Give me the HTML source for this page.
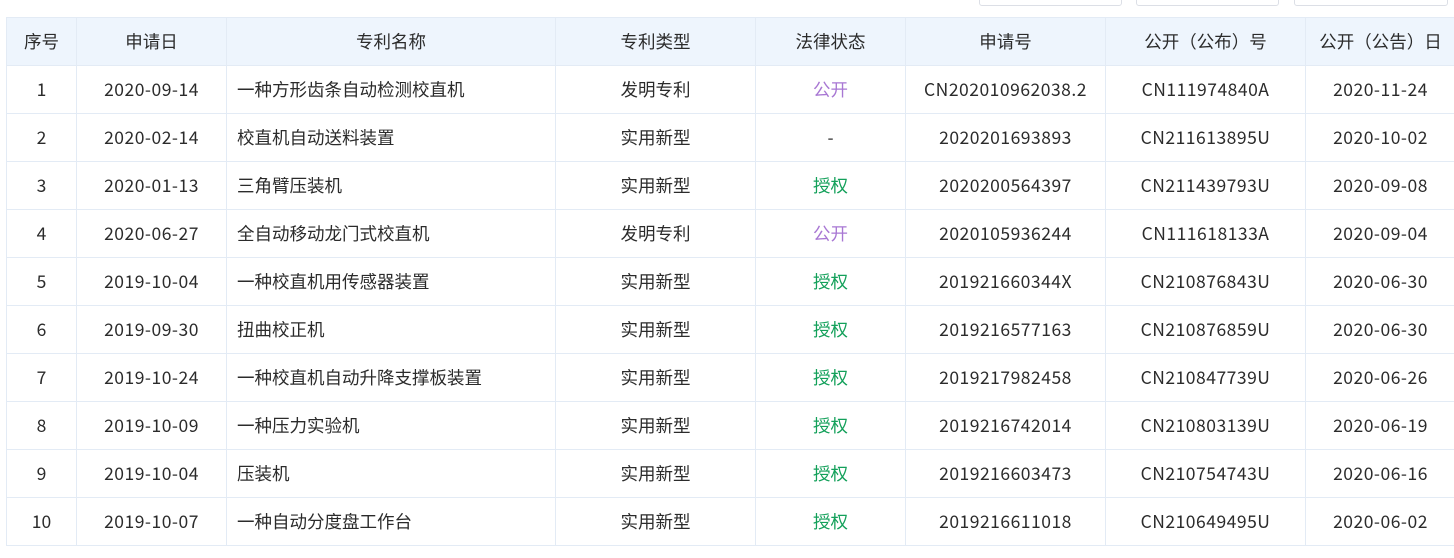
<!DOCTYPE html>
<html><head><meta charset="utf-8"><style>
body{margin:0;width:1454px;height:558px;background:#fff;overflow:hidden;font-family:"Noto Sans CJK SC","Liberation Sans",sans-serif;position:relative}
.btn{position:absolute;top:-10px;height:14px;border:1px solid #dcdfe6;border-radius:3px;background:#fff}
table{position:absolute;left:6px;top:17px;width:1449px;border-collapse:collapse;table-layout:fixed;font-size:17.5px;color:#2b2b2b}
td,th{border:1px solid #e3ebf5;height:47px;padding:0;text-align:center;font-weight:normal;white-space:nowrap;overflow:hidden;line-height:20px}
th{background:#eef5fd;color:#2b2b2b}
td.l{text-align:left;padding-left:10px}
td.n{letter-spacing:0.5px}
.p{color:#a877d3}.g{color:#13a05a}
</style></head><body>
<div class="btn" style="left:979px;width:141px"></div>
<div class="btn" style="left:1136px;width:141px"></div>
<div class="btn" style="left:1294px;width:152px"></div>
<table>
<colgroup><col style="width:70px"><col style="width:150px"><col style="width:329px"><col style="width:200px"><col style="width:150px"><col style="width:200px"><col style="width:200px"><col style="width:150px"></colgroup>
<tr><th>序号</th><th>申请日</th><th>专利名称</th><th>专利类型</th><th>法律状态</th><th>申请号</th><th>公开（公布）号</th><th>公开（公告）日</th></tr>
<tr><td>1</td><td class="n">2020-09-14</td><td class="l">一种方形齿条自动检测校直机</td><td>发明专利</td><td class="p">公开</td><td class="n">CN202010962038.2</td><td class="n">CN111974840A</td><td class="n">2020-11-24</td></tr>
<tr><td>2</td><td class="n">2020-02-14</td><td class="l">校直机自动送料装置</td><td>实用新型</td><td>-</td><td class="n">2020201693893</td><td class="n">CN211613895U</td><td class="n">2020-10-02</td></tr>
<tr><td>3</td><td class="n">2020-01-13</td><td class="l">三角臂压装机</td><td>实用新型</td><td class="g">授权</td><td class="n">2020200564397</td><td class="n">CN211439793U</td><td class="n">2020-09-08</td></tr>
<tr><td>4</td><td class="n">2020-06-27</td><td class="l">全自动移动龙门式校直机</td><td>发明专利</td><td class="p">公开</td><td class="n">2020105936244</td><td class="n">CN111618133A</td><td class="n">2020-09-04</td></tr>
<tr><td>5</td><td class="n">2019-10-04</td><td class="l">一种校直机用传感器装置</td><td>实用新型</td><td class="g">授权</td><td class="n">201921660344X</td><td class="n">CN210876843U</td><td class="n">2020-06-30</td></tr>
<tr><td>6</td><td class="n">2019-09-30</td><td class="l">扭曲校正机</td><td>实用新型</td><td class="g">授权</td><td class="n">2019216577163</td><td class="n">CN210876859U</td><td class="n">2020-06-30</td></tr>
<tr><td>7</td><td class="n">2019-10-24</td><td class="l">一种校直机自动升降支撑板装置</td><td>实用新型</td><td class="g">授权</td><td class="n">2019217982458</td><td class="n">CN210847739U</td><td class="n">2020-06-26</td></tr>
<tr><td>8</td><td class="n">2019-10-09</td><td class="l">一种压力实验机</td><td>实用新型</td><td class="g">授权</td><td class="n">2019216742014</td><td class="n">CN210803139U</td><td class="n">2020-06-19</td></tr>
<tr><td>9</td><td class="n">2019-10-04</td><td class="l">压装机</td><td>实用新型</td><td class="g">授权</td><td class="n">2019216603473</td><td class="n">CN210754743U</td><td class="n">2020-06-16</td></tr>
<tr><td>10</td><td class="n">2019-10-07</td><td class="l">一种自动分度盘工作台</td><td>实用新型</td><td class="g">授权</td><td class="n">2019216611018</td><td class="n">CN210649495U</td><td class="n">2020-06-02</td></tr>
</table>
</body></html>
